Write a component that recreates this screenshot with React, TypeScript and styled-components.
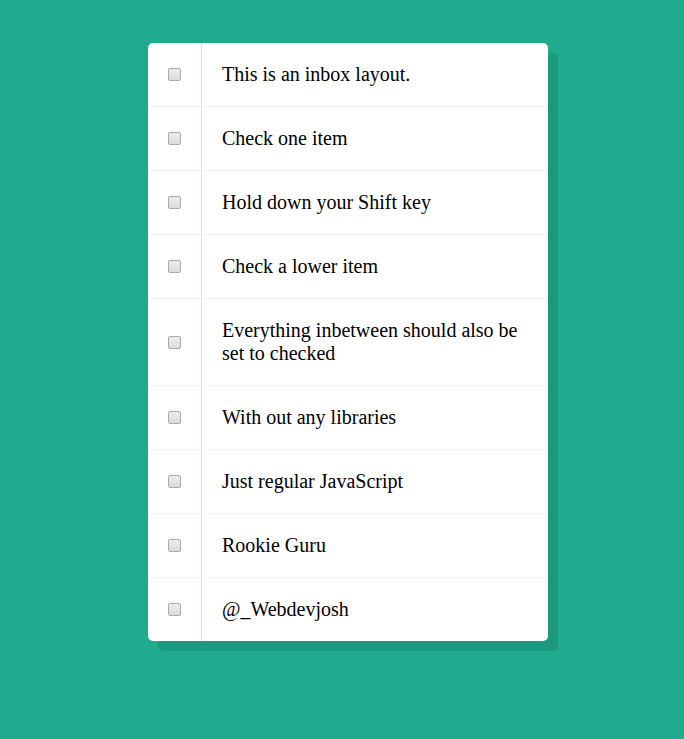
import React from "react";
import styled, { createGlobalStyle } from "styled-components";

const Global = createGlobalStyle`
  html { background: #20ab8e; }
  body {
    margin: 0;
    padding: 43px 0 50px 12px;
    background: #20ab8e;
    font-family: "Liberation Serif", "Times New Roman", serif;
  }
`;

const Inbox = styled.div`
  max-width: 400px;
  margin: 0 auto;
  background: #ffffff;
  border-radius: 5px;
  box-shadow: 10px 10px 0 rgba(0, 0, 0, 0.1);
`;

const Item = styled.div`
  display: flex;
  align-items: center;
  border-bottom: 1px solid #f1f1f1;
  &:last-child {
    border-bottom: 0;
  }
`;

const Check = styled.input`
  appearance: none;
  -webkit-appearance: none;
  width: 13px;
  height: 13px;
  margin: 20px;
  flex: none;
  box-sizing: border-box;
  border: 1px solid #a9a9a9;
  border-radius: 2px;
  background: linear-gradient(#ededed, #dcdcdc);
  cursor: pointer;
  &:checked::after {
    content: "";
    display: block;
    width: 3px;
    height: 7px;
    margin: 0 0 0 3px;
    border: solid #333;
    border-width: 0 2px 2px 0;
    transform: rotate(45deg);
  }
`;

const Label = styled.p`
  margin: 0;
  padding: 20px;
  flex: 1;
  font-family: "Liberation Serif", "Times New Roman", serif;
  font-size: 20px;
  font-weight: 400;
  color: #000;
  border-left: 1px solid #d1e2ff;
  transition: background 0.2s;
  input:checked + & {
    background: #f9f9f9;
    text-decoration: line-through;
  }
`;

const items = [
  "This is an inbox layout.",
  "Check one item",
  "Hold down your Shift key",
  "Check a lower item",
  "Everything inbetween should also be set to checked",
  "With out any libraries",
  "Just regular JavaScript",
  "Rookie Guru",
  "@_Webdevjosh",
];

export default function App() {
  return (
    <>
      <Global />
      <Inbox>
        {items.map((t) => (
          <Item key={t}>
            <Check type="checkbox" />
            <Label>{t}</Label>
          </Item>
        ))}
      </Inbox>
    </>
  );
}
